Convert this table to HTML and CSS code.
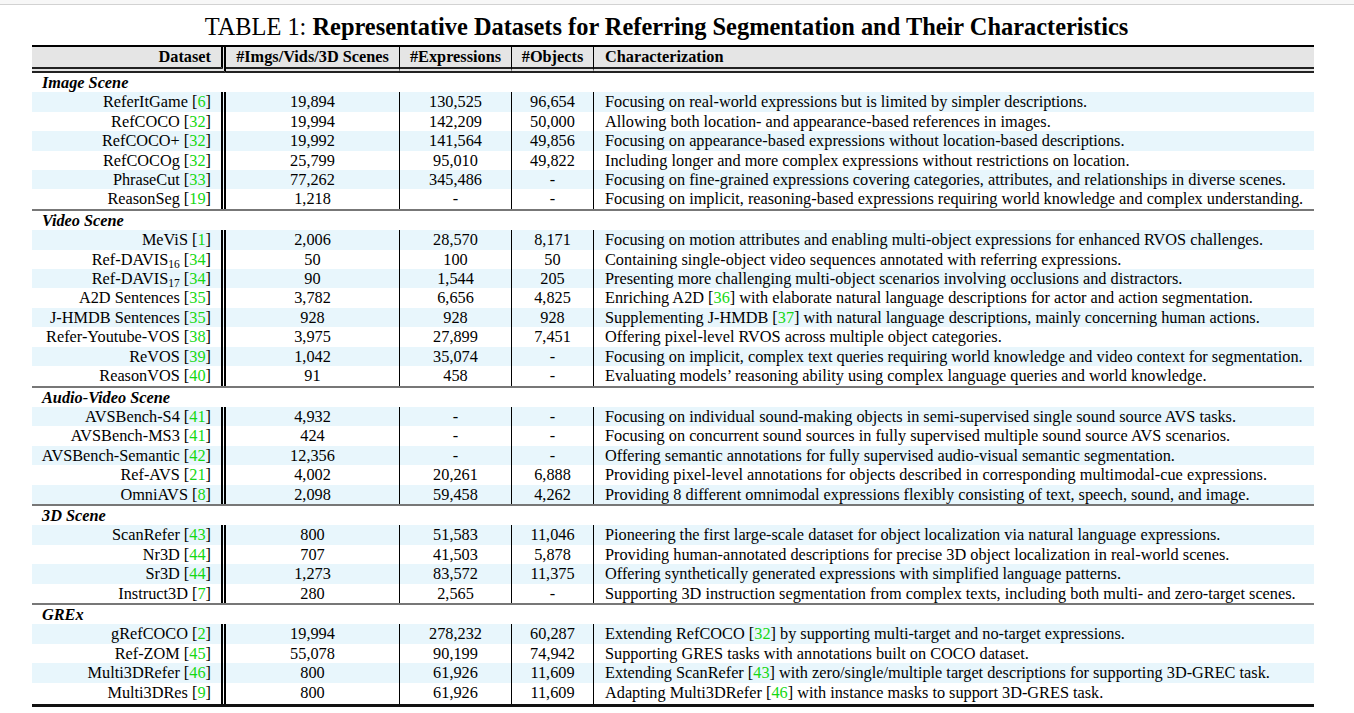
FILE: index.html
```html
<!DOCTYPE html>
<html>
<head>
<meta charset="utf-8">
<link rel="stylesheet" href="styles.css">
</head>
<body>
<div class="topbar"></div>
<div class="page">
  <div class="title">TABLE 1: <b>Representative Datasets for Referring Segmentation and Their Characteristics</b></div>
  <table class="tbl">
    <colgroup>
      <col class="w1"><col class="w2"><col class="w3"><col class="w4"><col class="w5">
    </colgroup>
    <thead>
      <tr>
        <th class="ds">Dataset</th>
        <th class="num">#Imgs/Vids/3D Scenes</th>
        <th class="num">#Expressions</th>
        <th class="num">#Objects</th>
        <th class="txt">Characterization</th>
      </tr>
    </thead>
    <tbody>
      <tr class="sec first"><td colspan="5">Image Scene</td></tr>
      <tr class="z"><td class="ds">ReferItGame [<span class="c">6</span>]</td><td class="num">19,894</td><td class="num">130,525</td><td class="num">96,654</td><td class="txt">Focusing on real-world expressions but is limited by simpler descriptions.</td></tr>
      <tr><td class="ds">RefCOCO [<span class="c">32</span>]</td><td class="num">19,994</td><td class="num">142,209</td><td class="num">50,000</td><td class="txt">Allowing both location- and appearance-based references in images.</td></tr>
      <tr class="z"><td class="ds">RefCOCO+ [<span class="c">32</span>]</td><td class="num">19,992</td><td class="num">141,564</td><td class="num">49,856</td><td class="txt">Focusing on appearance-based expressions without location-based descriptions.</td></tr>
      <tr><td class="ds">RefCOCOg [<span class="c">32</span>]</td><td class="num">25,799</td><td class="num">95,010</td><td class="num">49,822</td><td class="txt">Including longer and more complex expressions without restrictions on location.</td></tr>
      <tr class="z"><td class="ds">PhraseCut [<span class="c">33</span>]</td><td class="num">77,262</td><td class="num">345,486</td><td class="num">-</td><td class="txt">Focusing on fine-grained expressions covering categories, attributes, and relationships in diverse scenes.</td></tr>
      <tr><td class="ds">ReasonSeg [<span class="c">19</span>]</td><td class="num">1,218</td><td class="num">-</td><td class="num">-</td><td class="txt">Focusing on implicit, reasoning-based expressions requiring world knowledge and complex understanding.</td></tr>

      <tr class="sec"><td colspan="5">Video Scene</td></tr>
      <tr class="z"><td class="ds">MeViS [<span class="c">1</span>]</td><td class="num">2,006</td><td class="num">28,570</td><td class="num">8,171</td><td class="txt">Focusing on motion attributes and enabling multi-object expressions for enhanced RVOS challenges.</td></tr>
      <tr><td class="ds">Ref-DAVIS<sub>16</sub> [<span class="c">34</span>]</td><td class="num">50</td><td class="num">100</td><td class="num">50</td><td class="txt">Containing single-object video sequences annotated with referring expressions.</td></tr>
      <tr class="z"><td class="ds">Ref-DAVIS<sub>17</sub> [<span class="c">34</span>]</td><td class="num">90</td><td class="num">1,544</td><td class="num">205</td><td class="txt">Presenting more challenging multi-object scenarios involving occlusions and distractors.</td></tr>
      <tr><td class="ds">A2D Sentences [<span class="c">35</span>]</td><td class="num">3,782</td><td class="num">6,656</td><td class="num">4,825</td><td class="txt">Enriching A2D [<span class="c">36</span>] with elaborate natural language descriptions for actor and action segmentation.</td></tr>
      <tr class="z"><td class="ds">J-HMDB Sentences [<span class="c">35</span>]</td><td class="num">928</td><td class="num">928</td><td class="num">928</td><td class="txt">Supplementing J-HMDB [<span class="c">37</span>] with natural language descriptions, mainly concerning human actions.</td></tr>
      <tr><td class="ds">Refer-Youtube-VOS [<span class="c">38</span>]</td><td class="num">3,975</td><td class="num">27,899</td><td class="num">7,451</td><td class="txt">Offering pixel-level RVOS across multiple object categories.</td></tr>
      <tr class="z"><td class="ds">ReVOS [<span class="c">39</span>]</td><td class="num">1,042</td><td class="num">35,074</td><td class="num">-</td><td class="txt">Focusing on implicit, complex text queries requiring world knowledge and video context for segmentation.</td></tr>
      <tr><td class="ds">ReasonVOS [<span class="c">40</span>]</td><td class="num">91</td><td class="num">458</td><td class="num">-</td><td class="txt">Evaluating models’ reasoning ability using complex language queries and world knowledge.</td></tr>

      <tr class="sec"><td colspan="5">Audio-Video Scene</td></tr>
      <tr class="z"><td class="ds">AVSBench-S4 [<span class="c">41</span>]</td><td class="num">4,932</td><td class="num">-</td><td class="num">-</td><td class="txt">Focusing on individual sound-making objects in semi-supervised single sound source AVS tasks.</td></tr>
      <tr><td class="ds">AVSBench-MS3 [<span class="c">41</span>]</td><td class="num">424</td><td class="num">-</td><td class="num">-</td><td class="txt">Focusing on concurrent sound sources in fully supervised multiple sound source AVS scenarios.</td></tr>
      <tr class="z"><td class="ds">AVSBench-Semantic [<span class="c">42</span>]</td><td class="num">12,356</td><td class="num">-</td><td class="num">-</td><td class="txt">Offering semantic annotations for fully supervised audio-visual semantic segmentation.</td></tr>
      <tr><td class="ds">Ref-AVS [<span class="c">21</span>]</td><td class="num">4,002</td><td class="num">20,261</td><td class="num">6,888</td><td class="txt">Providing pixel-level annotations for objects described in corresponding multimodal-cue expressions.</td></tr>
      <tr class="z"><td class="ds">OmniAVS [<span class="c">8</span>]</td><td class="num">2,098</td><td class="num">59,458</td><td class="num">4,262</td><td class="txt">Providing 8 different omnimodal expressions flexibly consisting of text, speech, sound, and image.</td></tr>

      <tr class="sec"><td colspan="5">3D Scene</td></tr>
      <tr class="z"><td class="ds">ScanRefer [<span class="c">43</span>]</td><td class="num">800</td><td class="num">51,583</td><td class="num">11,046</td><td class="txt">Pioneering the first large-scale dataset for object localization via natural language expressions.</td></tr>
      <tr><td class="ds">Nr3D [<span class="c">44</span>]</td><td class="num">707</td><td class="num">41,503</td><td class="num">5,878</td><td class="txt">Providing human-annotated descriptions for precise 3D object localization in real-world scenes.</td></tr>
      <tr class="z"><td class="ds">Sr3D [<span class="c">44</span>]</td><td class="num">1,273</td><td class="num">83,572</td><td class="num">11,375</td><td class="txt">Offering synthetically generated expressions with simplified language patterns.</td></tr>
      <tr><td class="ds">Instruct3D [<span class="c">7</span>]</td><td class="num">280</td><td class="num">2,565</td><td class="num">-</td><td class="txt">Supporting 3D instruction segmentation from complex texts, including both multi- and zero-target scenes.</td></tr>

      <tr class="sec"><td colspan="5">GREx</td></tr>
      <tr class="z"><td class="ds">gRefCOCO [<span class="c">2</span>]</td><td class="num">19,994</td><td class="num">278,232</td><td class="num">60,287</td><td class="txt">Extending RefCOCO [<span class="c">32</span>] by supporting multi-target and no-target expressions.</td></tr>
      <tr><td class="ds">Ref-ZOM [<span class="c">45</span>]</td><td class="num">55,078</td><td class="num">90,199</td><td class="num">74,942</td><td class="txt">Supporting GRES tasks with annotations built on COCO dataset.</td></tr>
      <tr class="z"><td class="ds">Multi3DRefer [<span class="c">46</span>]</td><td class="num">800</td><td class="num">61,926</td><td class="num">11,609</td><td class="txt">Extending ScanRefer [<span class="c">43</span>] with zero/single/multiple target descriptions for supporting 3D-GREC task.</td></tr>
      <tr class="last"><td class="ds">Multi3DRes [<span class="c">9</span>]</td><td class="num">800</td><td class="num">61,926</td><td class="num">11,609</td><td class="txt">Adapting Multi3DRefer [<span class="c">46</span>] with instance masks to support 3D-GRES task.</td></tr>
    </tbody>
  </table>
</div>
</body>
</html>
```

FILE: styles.css
```css
html, body {
  margin: 0;
  padding: 0;
  background: #fff;
}
body {
  font-family: "Liberation Serif", "Times New Roman", serif;
  color: #000;
}
.topbar {
  height: 4px;
  background: #f7f7f7;
  border-bottom: 1px solid #d2d2d2;
}
.page {
  padding-left: 32px;
  width: 1282px;
}
.title {
  padding-top: 7px;
  padding-right: 13px;
  font-size: 24.4px;
  line-height: 30px;
  height: 30px;
  text-align: center;
  white-space: nowrap;
}
.title b {
  font-weight: bold;
}
.tbl {
  margin-top: 3px;
  width: 1282px;
  border-collapse: separate;
  border-spacing: 0;
  table-layout: fixed;
  font-size: 16.3px;
  border-top: 2px solid #000;
  border-bottom: 3px solid #111;
}
.w1 { width: 194px; }
.w2 { width: 174px; }
.w3 { width: 112px; }
.w4 { width: 82px; }
.w5 { width: 720px; }
.tbl th, .tbl td {
  padding: 0;
  height: 19.4px;
  line-height: 19.4px;
  white-space: nowrap;
  vertical-align: middle;
}
.tbl thead th {
  background: #e5e5e5;
  font-weight: bold;
  height: 20px;
  line-height: 20px;
  border-bottom: 6px double #222;
}
.ds {
  text-align: right;
  padding-right: 10px !important;
  border-right: 5px double #000;
}
.num {
  text-align: center;
  border-right: 1px solid #000;
}
.txt {
  text-align: left;
  padding-left: 11px !important;
}
.tbl tr.z td {
  background: #e8f6fc;
}
.sec td {
  font-weight: bold;
  font-style: italic;
  padding-left: 10px !important;
  border-top: 2px solid #777;
}
.sec.first td {
  border-top: none;
}
.tbl tr.last td {
  padding-bottom: 2px;
}
.c {
  color: #14d814;
}
sub {
  font-size: 11.5px;
  line-height: 0;
  vertical-align: -3px;
}
```
